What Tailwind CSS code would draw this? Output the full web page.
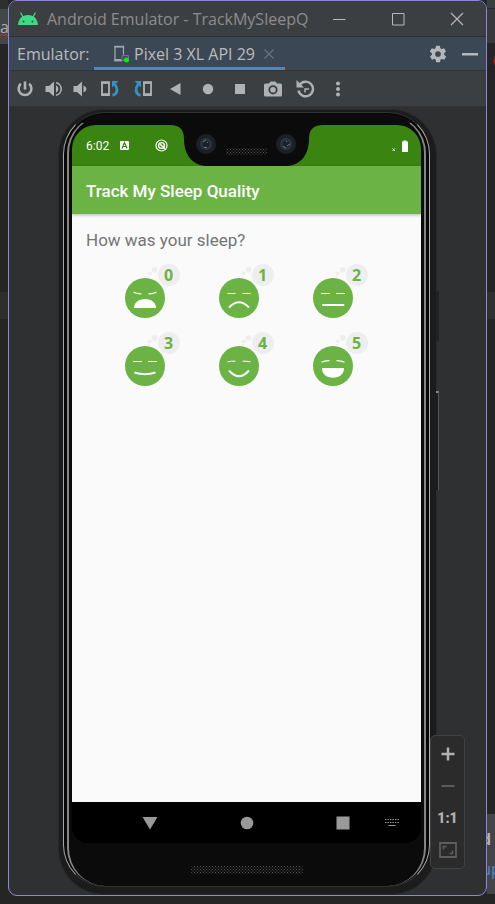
<!DOCTYPE html>
<html lang="en">
<head>
<meta charset="utf-8">
<meta name="viewport" content="width=device-width, initial-scale=1">
<title>Android Emulator - TrackMySleepQuality</title>
<script src="https://cdn.jsdelivr.net/npm/@tailwindcss/browser@4"></script>
</head>
<body class="bg-[#252525] font-['Open_Sans','Noto_Sans',sans-serif]">
<div class="flex min-h-screen overflow-hidden">

  <!-- Editor behind the window, left edge -->
  <div class="flex w-2 shrink-0 flex-col overflow-hidden" aria-hidden="true">
    <div class="h-[9px] bg-[#2e2f30]"></div>
    <div class="h-[35px] bg-[#444648] pt-2 text-base leading-5 text-[#a9adb2]">a
      <svg class="-mt-1 block" width="8" height="4" viewBox="0 0 8 4" fill="none" stroke="#c0302c"><path d="M0 3l2-2 2 2 2-2 2 2"/></svg>
    </div>
    <div class="h-[248px]"></div>
    <div class="h-[27px] bg-[#2e2e2e]"></div>
  </div>

  <!-- Emulator window -->
  <div class="mb-2 flex min-w-0 flex-1 flex-col overflow-hidden rounded-[9px] border border-[#8f85dd] bg-[#2f3032]">
    <header class="flex h-9 items-center border-b border-[#2f2f30] bg-[#3c3f41] pl-2">
      <svg class="shrink-0" width="22" height="14" viewBox="0 0 22 14"><path d="M1 13C1.300 8 4 5 7 3.800 9.500 2.800 12.500 2.800 15 3.800 18 5 20.700 8 21 13Z" fill="#3ddc84"/><path d="M6 5 3.800 1M16 5l2.200-4" stroke="#3ddc84" stroke-width="1.200" stroke-linecap="round"/><circle cx="6.500" cy="9.500" r="1" fill="#3c3f41"/><circle cx="15.500" cy="9.500" r="1" fill="#3c3f41"/></svg>
      <h1 class="ml-2 flex-1 whitespace-nowrap text-base text-[#8c8c8c]">Android Emulator - TrackMySleepQ</h1>
      <button aria-label="Minimize" class="flex h-9 w-[59px] items-center justify-center"><svg width="14" height="14" viewBox="0 0 14 14"><path d="M1 7.500h12.500" stroke="#b8b8b8"/></svg></button>
      <button aria-label="Maximize" class="flex h-9 w-[59px] items-center justify-center"><svg width="14" height="14" viewBox="0 0 14 14"><path d="M1.500 1.500h11.500v11.500h-11.500z" fill="none" stroke="#b8b8b8"/></svg></button>
      <button aria-label="Close" class="flex h-9 w-[59px] items-center justify-center"><svg width="14" height="14" viewBox="0 0 14 14"><path d="M1 1l12 12M13 1 1 13" stroke="#b8b8b8" stroke-width="1.200"/></svg></button>
    </header>

    <div class="flex h-[34px] items-stretch border-b border-[#323436] bg-[#3c4755] text-base text-[#bbbbbb]">
      <span class="flex w-[85px] items-center whitespace-nowrap pl-2">Emulator:</span>
      <div class="flex w-[191px] items-center border-b-[3px] border-[#4a88c7] pl-5 pt-[3px]">
        <svg class="shrink-0" width="16" height="18" viewBox="0 0 16 18"><path d="M8 15.500H1V1.500h8.500v8" fill="none" stroke="#9aa7b0" stroke-width="1.300"/><path d="M.4 1h9.700v1.500H.4zM.4 14h7v2.200h-7z" fill="#9aa7b0"/><path d="M8 10.500h6.500v5H8z" fill="#4a4a66" stroke="#7c6aa0"/><circle cx="12.500" cy="15" r="2.500" fill="#00f000"/></svg>
        <span class="ml-1 whitespace-nowrap">Pixel 3 XL API 29</span>
        <button aria-label="Close tab" class="ml-2"><svg width="12" height="12" viewBox="0 0 12 12"><path d="M1.500 1.500l9 9M10.500 1.500l-9 9" stroke="#6b737c" stroke-width="1.200"/></svg></button>
      </div>
      <div class="flex flex-1 items-center justify-end pr-2">
        <button aria-label="Settings" class="mr-[15px]"><svg width="18" height="18" viewBox="1 1 22 22" fill="#b4b8bb"><path d="M19.400 13a7.500 7.500 0 0 0 0-2l2.100-1.600a.5.5 0 0 0 .1-.7l-2-3.400a.5.5 0 0 0-.6-.2l-2.500 1a7.300 7.300 0 0 0-1.700-1l-.4-2.700a.5.5 0 0 0-.5-.4h-4a.5.5 0 0 0-.5.4l-.4 2.700a7.300 7.300 0 0 0-1.700 1l-2.500-1a.5.5 0 0 0-.6.2l-2 3.400a.5.5 0 0 0 .1.700L4.600 11a7.500 7.500 0 0 0 0 2l-2.100 1.600a.5.5 0 0 0-.1.700l2 3.400c.1.200.4.300.6.200l2.500-1c.5.400 1.100.8 1.700 1l.4 2.700c0 .2.200.4.5.4h4c.3 0 .5-.2.5-.4l.4-2.700c.6-.2 1.200-.6 1.700-1l2.500 1c.2.100.5 0 .6-.2l2-3.400a.5.5 0 0 0-.1-.7zM12 15.500a3.500 3.500 0 1 1 0-7 3.500 3.500 0 0 1 0 7z" fill-rule="evenodd"/></svg></button>
        <button aria-label="Hide"><svg width="16" height="16" viewBox="0 0 16 16"><path d="M0 7h16v2.500H0z" fill="#b4b8bb"/></svg></button>
      </div>
    </div>

    <div role="toolbar" aria-label="Emulator controls" class="flex h-9 items-center border-b border-[#323334] bg-[#3c3f41] text-[#afb1b3]">
      <button aria-label="Power" class="flex w-8 justify-center"><svg width="18" height="18" viewBox="0 0 18 18" fill="none" stroke="currentColor" stroke-width="2.600"><path d="M9 1.500v8M4.800 3.800a6.400 6.400 0 1 0 8.400 0"/></svg></button>
      <button aria-label="Volume up" class="flex w-[26px] justify-center"><svg width="18" height="16" viewBox="0 0 18 16" fill="currentColor"><path d="M.5 5h3.500l5-4.500v15l-5-4.500H.5z"/><path d="M11 4.500v7c3-1.200 3-5.800 0-7z"/><path d="M11 1.800a6.300 6.300 0 0 1 0 12.400" fill="none" stroke="currentColor" stroke-width="1.600"/></svg></button>
      <button aria-label="Volume down" class="flex w-[26px] justify-center"><svg width="14" height="16" viewBox="0 0 14 16" fill="currentColor"><path d="M.5 5h3.500l5-4.500v15l-5-4.500H.5z"/><path d="M10.500 4.500v7c3.800-1.500 3.800-5.500 0-7z"/></svg></button>
      <button aria-label="Rotate left" class="flex w-[33px] justify-center"><svg width="20" height="18" viewBox="0 0 20 18" fill="none"><path d="M2 2.500h7v12H2z" stroke="#afb1b3" stroke-width="1.800"/><path d="M1.100 1.500h8.800v2.200H1.100zM1.100 13.500h8.800v2.500H1.100z" fill="#afb1b3"/><path d="M12.500 15.500c5.500-2 5.500-7 2.500-11" stroke="#3592c4" stroke-width="2.800"/><path d="M12 1h6.500L12 7.500z" fill="#3592c4"/></svg></button>
      <button aria-label="Rotate right" class="flex w-[33px] justify-center"><svg width="20" height="18" viewBox="0 0 20 18" fill="none"><path d="M11 2.500h7v12h-7z" stroke="#afb1b3" stroke-width="1.800"/><path d="M10.100 1.500h8.800v2.200h-8.800zM10.100 13.500h8.800v2.500h-8.800z" fill="#afb1b3"/><path d="M7.500 15.500c-5.500-2-5.500-7-2.500-11" stroke="#3592c4" stroke-width="2.800"/><path d="M8 1H1.500L8 7.500z" fill="#3592c4"/></svg></button>
      <button aria-label="Back" class="flex w-[33px] justify-center"><svg width="12" height="12" viewBox="0 0 12 12" fill="currentColor"><path d="M10.500 0v12L0 6z"/></svg></button>
      <button aria-label="Home" class="flex w-8 justify-center"><svg width="12" height="12" viewBox="0 0 12 12" fill="currentColor"><circle cx="6" cy="6" r="5.200"/></svg></button>
      <button aria-label="Overview" class="flex w-8 justify-center"><svg width="10" height="10" viewBox="0 0 10 10" fill="currentColor"><path d="M0 0h10v10H0z"/></svg></button>
      <button aria-label="Screenshot" class="flex w-[33px] justify-center"><svg width="18" height="16" viewBox="0 0 18 16" fill="currentColor"><path d="M6.500.5h5L13 2.500h3.500q1.500 0 1.500 1.500v10q0 1.500-1.500 1.500h-15Q0 15.500 0 14V4q0-1.500 1.500-1.500H5z"/><circle cx="9" cy="8.800" r="4.600" fill="#3c3f41"/><circle cx="9" cy="8.800" r="2.800"/></svg></button>
      <button aria-label="Snapshots" class="flex w-8 justify-center"><svg width="19" height="18" viewBox="0 0 19 18" fill="none" stroke="currentColor" stroke-width="2.400"><path d="M3.500 5A7.300 7.300 0 1 1 2.500 10.500"/><path d="M9 12.500V9h4" stroke-width="1.500"/><path d="M.5 0v7.500H8z" fill="currentColor" stroke="none"/></svg></button>
      <button aria-label="More" class="flex w-[33px] justify-center"><svg width="6" height="16" viewBox="0 0 6 16" fill="currentColor"><circle cx="3" cy="2.500" r="2"/><circle cx="3" cy="8" r="2"/><circle cx="3" cy="13.500" r="2"/></svg></button>
    </div>

    <!-- Device -->
    <main class="relative flex flex-1 flex-col px-[49px] pt-[2px]">
      <div class="relative flex flex-1 flex-col rounded-[46px] border border-[#292a2a] bg-[#1c1c1c] pb-[7px] pl-1 pr-[6px] pt-[2px]">
        <div class="absolute -right-[3px] top-[181px] h-[50px] w-[3px] rounded-sm bg-[#222222]" aria-hidden="true"></div>
        <div class="absolute -right-[3px] top-[281px] h-[99px] w-[3px] border-r border-t-2 border-[#888888] border-r-[#555555] bg-[#1c1c1c]" aria-hidden="true"></div>
        <div class="flex flex-1 flex-col rounded-[42px] border border-x-[#a8a8a8] border-y-[#333333] bg-[#080808] px-[3px] pt-[2px]">
          <div class="flex flex-1 flex-col rounded-[38px] border-x-2 border-t border-x-[#858585] border-t-[#101010] bg-[#0b0b0b] px-[3px] pt-[9px]">

            <div class="flex flex-1 flex-col overflow-hidden rounded-t-[24px] rounded-b-[16px] bg-black font-['Roboto',sans-serif]">
              <div class="relative flex h-[41px] shrink-0 items-center bg-[#3a8412] pl-[14px] pr-[13px] text-white">
                <span class="w-[34px] text-xs leading-4">6:02</span>
                <svg width="9" height="9" viewBox="0 0 9 9"><rect width="9" height="9" rx="1" fill="#fff"/><path d="M2 7.500 4.500 1.500 7 7.500M3 5.500h3" fill="none" stroke="#3a8412" stroke-width="1.200"/></svg>
                <svg class="ml-[26px]" width="13" height="13" viewBox="0 0 13 13" fill="none" stroke="#fff"><circle cx="6.500" cy="6.500" r="5.500" stroke-width="1.200"/><circle cx="6.500" cy="6.500" r="2.900" stroke-width="1.400"/><path d="m5 5 5 5" stroke-width="1.500"/></svg>
                <svg class="absolute left-1/2 top-0 -translate-x-[77px]" width="153" height="41" viewBox="0 0 153 41" aria-hidden="true">
                  <defs><pattern id="mesh" width="3" height="3" patternUnits="userSpaceOnUse"><path d="M0 0h1v1H0zM1.500 1.500h1v1h-1z" fill="#505050"/></pattern></defs>
                  <path d="M0 0C10 0 14 5 14 14V16C15 30 22 40 36 41H117C131 40 138 30 139 16V14C139 5 143 0 153 0Z" fill="#0b0b0b"/>
                  <g><circle cx="36" cy="19" r="10" fill="#1a2027"/><circle cx="36" cy="19" r="6" fill="#2e343a"/><circle cx="36" cy="19" r="3.500" fill="#1c2024"/><path d="m33 17 3-2M37 18l1-1M34 22l3 1" stroke="#747b84"/></g>
                  <g><circle cx="116" cy="19" r="10" fill="#1a2027"/><circle cx="116" cy="19" r="6" fill="#2e343a"/><circle cx="116" cy="19" r="3.500" fill="#1c2024"/><path d="m116 17 1-1M117 21l3-2M113 21l3 2" stroke="#747b84"/></g>
                  <rect x="56" y="23" width="41" height="7" rx="2" fill="url(#mesh)"/>
                </svg>
                <svg class="ml-auto" width="17" height="12" viewBox="0 0 17 12"><path d="m1.500 8.500 2.500 2.500M4 8.500l-2.500 2.500" stroke="#fff"/><path d="M11 1.500h1.500V.500h3v1H17V12h-6z" fill="#fff"/></svg>
              </div>
              <div class="z-10 flex h-12 shrink-0 items-center bg-[#6ab344] px-[14px] shadow-[0_1px_3px_rgba(0,0,0,0.3)]">
                <h2 class="whitespace-nowrap pt-[2px] text-[17px] font-medium leading-5 text-white">Track My Sleep Quality</h2>
              </div>
              <section class="flex-1 bg-[#fafafa] px-[14px] pt-4">
                <h3 id="question" class="text-[17px] leading-5 text-[#757575]">How was your sleep?</h3>
                <div role="group" aria-labelledby="question" class="ml-[39px] mt-[14px] grid grid-cols-[repeat(3,56px)] gap-x-[38px] gap-y-[14px] font-['Open_Sans',sans-serif]">
                  <button aria-label="Quality 0"><svg class="block" width="56" height="54" viewBox="0 0 56 54"><g fill="#eeeeee"><circle cx="44" cy="11" r="11"/><circle cx="29.700" cy="5.700" r="2.800"/><circle cx="24.700" cy="9.300" r="1.900"/><circle cx="23.700" cy="13" r="1"/></g><text x="43.500" y="16.500" text-anchor="middle" font-size="16" font-weight="700" fill="#6ab344">0</text><circle cx="20" cy="34" r="20" fill="#6ab344"/><path d="M8.500 28.300Q12 30 16.500 29.800M31.500 28.300Q28 30 23.500 29.800" fill="none" stroke="#fff" stroke-width="1.200"/><path d="M9 44C9 39 13 35 20 35S31 39 31 44Z" fill="#fff"/></svg></button>
                  <button aria-label="Quality 1"><svg class="block" width="56" height="54" viewBox="0 0 56 54"><g fill="#eeeeee"><circle cx="44" cy="11" r="11"/><circle cx="29.700" cy="5.700" r="2.800"/><circle cx="24.700" cy="9.300" r="1.900"/><circle cx="23.700" cy="13" r="1"/></g><text x="43.500" y="16.500" text-anchor="middle" font-size="16" font-weight="700" fill="#6ab344">1</text><circle cx="20" cy="34" r="20" fill="#6ab344"/><path d="M8.500 29.500h8M23.500 29.500h8" stroke="#fff"/><path d="M10 43.500Q20 33 30 43.500" fill="none" stroke="#fff" stroke-width="2"/></svg></button>
                  <button aria-label="Quality 2"><svg class="block" width="56" height="54" viewBox="0 0 56 54"><g fill="#eeeeee"><circle cx="44" cy="11" r="11"/><circle cx="29.700" cy="5.700" r="2.800"/><circle cx="24.700" cy="9.300" r="1.900"/><circle cx="23.700" cy="13" r="1"/></g><text x="43.500" y="16.500" text-anchor="middle" font-size="16" font-weight="700" fill="#6ab344">2</text><circle cx="20" cy="34" r="20" fill="#6ab344"/><path d="M8 29.500h9M23 29.500h9" stroke="#fff"/><path d="M10 41h20.500" stroke="#fff" stroke-width="2" stroke-linecap="round"/></svg></button>
                  <button aria-label="Quality 3"><svg class="block" width="56" height="54" viewBox="0 0 56 54"><g fill="#eeeeee"><circle cx="44" cy="11" r="11"/><circle cx="29.700" cy="5.700" r="2.800"/><circle cx="24.700" cy="9.300" r="1.900"/><circle cx="23.700" cy="13" r="1"/></g><text x="43.500" y="16.500" text-anchor="middle" font-size="16" font-weight="700" fill="#6ab344">3</text><circle cx="20" cy="34" r="20" fill="#6ab344"/><path d="M8 29.500h9M23 29.500h9" stroke="#fff"/><path d="M9.500 40.500Q20 44 30.500 40.500" fill="none" stroke="#fff" stroke-width="2"/></svg></button>
                  <button aria-label="Quality 4"><svg class="block" width="56" height="54" viewBox="0 0 56 54"><g fill="#eeeeee"><circle cx="44" cy="11" r="11"/><circle cx="29.700" cy="5.700" r="2.800"/><circle cx="24.700" cy="9.300" r="1.900"/><circle cx="23.700" cy="13" r="1"/></g><text x="43.500" y="16.500" text-anchor="middle" font-size="16" font-weight="700" fill="#6ab344">4</text><circle cx="20" cy="34" r="20" fill="#6ab344"/><path d="M8.500 29.800Q12 29 16.500 29.200M31.500 29.800Q28 29 23.500 29.200" fill="none" stroke="#fff"/><path d="M10 38.500Q20 50 30 38.500" fill="none" stroke="#fff" stroke-width="2"/></svg></button>
                  <button aria-label="Quality 5"><svg class="block" width="56" height="54" viewBox="0 0 56 54"><g fill="#eeeeee"><circle cx="44" cy="11" r="11"/><circle cx="29.700" cy="5.700" r="2.800"/><circle cx="24.700" cy="9.300" r="1.900"/><circle cx="23.700" cy="13" r="1"/></g><text x="43.500" y="16.500" text-anchor="middle" font-size="16" font-weight="700" fill="#6ab344">5</text><circle cx="20" cy="34" r="20" fill="#6ab344"/><path d="M8.500 30.300Q12 28.500 16.500 28.700M31.500 30.300Q28 28.500 23.500 28.700" fill="none" stroke="#fff" stroke-width="1.200"/><path d="M9 36H31C31 42 27 45.700 20 45.700S9 42 9 36Z" fill="#fff"/></svg></button>
                </div>
              </section>
              <nav class="flex h-[41px] shrink-0 items-center bg-black pl-[70px] pr-[22px]">
                <button aria-label="Navigate back"><svg width="16" height="14" viewBox="0 0 16 14"><path d="M.500 1h15L8 13.500z" fill="#999"/></svg></button>
                <button aria-label="Navigate home" class="ml-[82px]"><svg width="14" height="14" viewBox="0 0 14 14"><circle cx="7" cy="7" r="6.300" fill="#999"/></svg></button>
                <button aria-label="Recent apps" class="ml-[82px]"><svg width="14" height="14" viewBox="0 0 14 14"><path d="M.500.500h13v13H.500z" fill="#999"/></svg></button>
                <button aria-label="Switch keyboard" class="ml-auto"><svg width="14" height="9" viewBox="0 0 14 9" fill="none" stroke="#999"><path d="M0 1.500h14M0 4.500h14" stroke-dasharray="1.400 1.100"/><path d="M3.500 7.500h7"/></svg></button>
              </nav>
            </div>

            <div class="flex h-[43px] shrink-0 items-center justify-center pt-[11px]" aria-hidden="true">
              <svg width="112" height="8" viewBox="0 0 112 8"><rect width="112" height="8" rx="2" fill="url(#mesh)"/></svg>
            </div>
          </div>
        </div>
      </div>

      <!-- Zoom controls floating over the device -->
      <div class="absolute bottom-[26px] right-[21px] flex w-[35px] flex-col items-center rounded-[5px] border border-[#404142] bg-[#2b2b2b] py-[2px]">
        <button aria-label="Zoom in" class="flex h-8 w-8 items-center justify-center"><svg width="14" height="14" viewBox="0 0 14 14"><path d="M7 .500v13M.500 7h13" stroke="#afb1b3" stroke-width="2.500"/></svg></button>
        <button aria-label="Zoom out" class="flex h-8 w-8 items-center justify-center"><svg width="14" height="14" viewBox="0 0 14 14"><path d="M.500 7h13" stroke="#5c5d5e" stroke-width="2.200"/></svg></button>
        <button aria-label="Actual size" class="flex h-8 w-8 items-center justify-center font-['Roboto',sans-serif] text-sm font-black text-[#afb1b3]">1:1</button>
        <button aria-label="Fit to window" class="flex h-8 w-8 items-center justify-center"><svg width="18" height="16" viewBox="0 0 18 16" fill="none" stroke="#5c5d5e"><path d="M1 1h16v14H1z" stroke-width="1.800"/><path d="M4.500 7.500V4.500h3M13.500 8.500v3h-3" stroke-width="1.500"/></svg></button>
      </div>
    </main>
  </div>

  <!-- Editor behind the window, right edge -->
  <div class="flex w-2 shrink-0 flex-col overflow-hidden" aria-hidden="true">
    <div class="h-[9px] border-b border-[#2b2b2b] bg-[#3c3f41]"></div>
    <div class="h-[34px] bg-[#38393b]"></div>
    <div class="h-[13px]"></div>
    <div class="ml-[6px] h-[10px] w-[10px] rounded-full bg-[#8f1d1d]"></div>
    <div class="h-[226px]"></div>
    <div class="h-[27px] bg-[#303030]"></div>
    <div class="h-[495px]"></div>
    <div class="flex h-[80px] flex-col bg-[#434547] pt-[10px] text-base leading-[30px]">
      <span class="flex w-1 justify-end font-bold text-[#b9b3a6]">d</span>
      <span class="flex w-2 justify-center text-[#4a88d7]">up</span>
    </div>
  </div>
</div>
</body>
</html>
